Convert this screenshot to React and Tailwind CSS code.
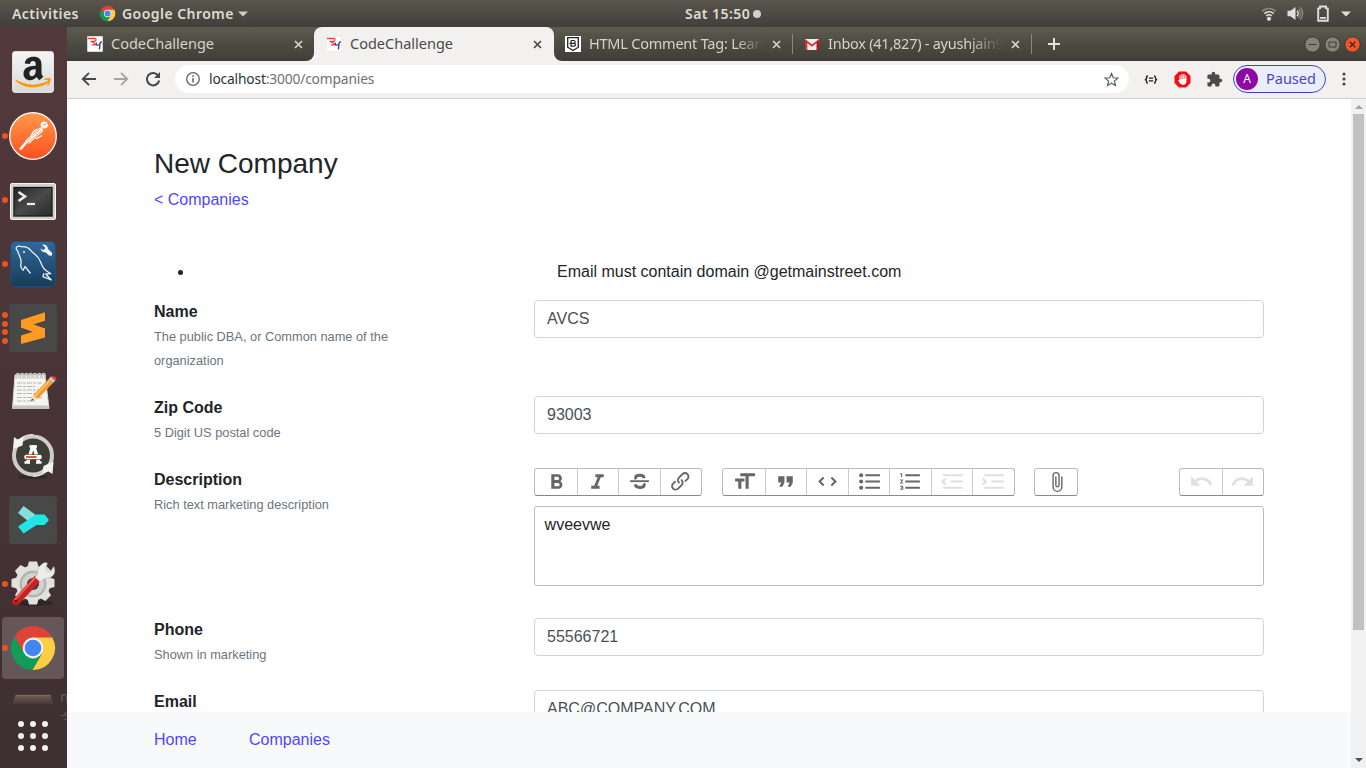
import React from "react";

const UI = "font-['Noto_Sans','Open_Sans',sans-serif]";

function ChromeLogo({ className }) {
  return (
    <svg viewBox="0 0 48 48" className={className}>
      <path d="M5.24 12.5A22 22 0 0 1 43.3 13.5L24 13.5V24L14.9 29.25Z" fill="#db4437" />
      <path d="M43.3 13.5A22 22 0 0 1 23.4 46L33.1 29.25L24 24V13.5Z" fill="#ffcd40" />
      <path d="M23.4 46A22 22 0 0 1 5.24 12.5L14.9 29.25L24 24L33.1 29.25Z" fill="#0f9d58" />
      <circle cx="24" cy="24" r="10.4" fill="#f1f1f1" />
      <circle cx="24" cy="24" r="8.3" fill="#4285f4" />
    </svg>
  );
}

function TopBar() {
  return (
    <header className={`flex h-[27px] shrink-0 items-center bg-linear-to-b from-[#5a564d] to-[#403f3a] text-[14px] font-semibold tracking-[0.45px] text-[#dfdbd2] ${UI}`}>
      <div className="flex w-[620px] items-center pl-3">
        <span className="w-[87px] whitespace-nowrap">Activities</span>
        <ChromeLogo className="h-[17px] w-[17px]" />
        <span className="ml-[6px] w-[110px] whitespace-nowrap">Google Chrome</span>
        <svg width="10" height="6" className="ml-[6px]"><path d="M0 .5h10L5 5.5z" fill="#cfccc4" /></svg>
      </div>
      <div className="flex flex-1 items-center pl-[65px]">
        <span className="w-[65px] whitespace-nowrap">Sat 15:50</span>
        <span className="ml-[3px] h-2 w-2 rounded-full bg-[#cfcfcf]" />
      </div>
      <div className="flex items-center pr-[15px]">
        <svg width="16" height="16" viewBox="0 0 16 16" fill="none" strokeWidth="1.6">
          <path d="M1.2 5.400a9.500 9.500 0 0 1 13.600 0" stroke="#8b8880" />
          <path d="M3.400 7.600a6.500 6.500 0 0 1 9.200 0" stroke="#dedede" />
          <path d="M5.300 9.900a3.600 3.600 0 0 1 5.400 0" stroke="#dedede" />
          <circle cx="8" cy="12.800" r="2.100" fill="#dedede" />
        </svg>
        <svg width="18" height="16" viewBox="0 0 18 16" fill="none" strokeWidth="1.4" className="ml-[10px]">
          <path d="M.5 4.800h3L8.500 1v13L3.500 10.200h-3z" fill="#dedede" />
          <path d="M10 4.800a4 4 0 0 1 0 5.400" stroke="#dedede" />
          <path d="M11.600 3a7 7 0 0 1 0 9M13.300 1.300a9.500 9.500 0 0 1 0 12.400" stroke="#8b8880" />
        </svg>
        <svg width="12" height="17" viewBox="0 0 12 17" className="ml-[12px]">
          <path d="M1.2 3.500L3 3.200V1.500h6v1.700l1.800.3v12.200H1.200z" fill="none" stroke="#dedede" strokeWidth="1.900" />
          <path d="M3 12h6v1.800H3z" fill="#dedede" />
        </svg>
        <svg width="10" height="6" className="ml-[12px]"><path d="M0 .5h10L5 5.5z" fill="#dedede" /></svg>
      </div>
    </header>
  );
}

function AmazonIcon() {
  return (
    <svg viewBox="0 0 48 48" className="size-12">
      <defs><linearGradient id="am" x2="0" y2="1"><stop stopColor="#f5f5f5" /><stop offset="1" stopColor="#d9d9d9" /></linearGradient></defs>
      <rect x="3.7" y="3.7" width="40.600" height="40.600" rx="2" fill="url(#am)" stroke="#fafafa" />
      <path d="M15.700 15.500C16.500 11 19.500 8.800 24.500 8.800c5.200 0 8 2.600 8 7.700v8c0 2 .6 3 1.800 4.300l-3.900 3.400c-1.300-1-2.200-2-2.800-3.100-1.700 2-3.700 3.100-6.300 3.100-4 0-6.800-2.400-6.800-6.500 0-5.400 4.300-7.700 12.200-7.900v-1.500c0-2-.8-3.200-2.700-3.200-1.700 0-2.700 1-3 2.900zM26.700 21.300c-4 .1-6.300 1.200-6.300 4 0 1.800.9 2.900 2.500 2.900 2.400 0 3.900-2.200 3.800-5.600z" fill="#222" />
      <path d="M6.500 31.500c10.500 6.500 23 7 33.200.8l.9 1.400c-10.500 8.300-25.500 7-34.500-1.300z" fill="#f90" />
      <path d="M35.200 31c2-1 5-1.300 6.500-.6.3 2-1 5.500-2.700 7.100l-.8-.5c.9-1.600 1.400-3.500 1.100-4.700-1-.5-2.700-.4-4.100-.3z" fill="#f90" />
    </svg>
  );
}

function PostmanIcon() {
  return (
    <svg viewBox="0 0 48 48" className="size-12">
      <defs><linearGradient id="pm" x2="0" y2="1"><stop stopColor="#ff9a4a" /><stop offset="1" stopColor="#fd4f1f" /></linearGradient></defs>
      <circle cx="24" cy="24" r="23.300" fill="url(#pm)" stroke="#fff" strokeWidth="1.300" />
      <circle cx="35.200" cy="13" r="3.600" fill="#fff" />
      <path d="M34.500 13l3-1.500" stroke="#fd7a38" strokeWidth="1" />
      <path d="M31 15.500c2.500.3 3.300 1.700 2.800 4L20 31.700l-3.700-3.200z" fill="#fff" />
      <path d="M30.500 17.500L18.500 28.600M33 18.800L19 31" stroke="#fd7a38" strokeWidth=".8" />
      <path d="M17.500 30l-5.700 6.700" stroke="#fff" strokeWidth="2.600" strokeLinecap="round" />
      <path d="M22.500 25.500c-.5-4 2-7 6-8.500M27 27l6-3.500" stroke="#fff" strokeWidth="1.100" fill="none" />
    </svg>
  );
}

function TerminalIcon() {
  return (
    <svg viewBox="0 -2 48 48" className="size-12">
      <defs><linearGradient id="tm" x2="1" y2="1"><stop stopColor="#252525" /><stop offset=".5" stopColor="#4a4a4a" /><stop offset="1" stopColor="#2a2a2a" /></linearGradient></defs>
      <rect x="1.500" y="5.500" width="45" height="36" rx="1.500" fill="#cfcfcc" stroke="#f4f4f4" />
      <rect x="4" y="8.500" width="40" height="30.500" fill="#9a9a98" />
      <rect x="5" y="9.500" width="38" height="28.500" fill="url(#tm)" stroke="#111" />
      <path d="M9.500 14l6.500 4.500-6.500 4.500" stroke="#eee" strokeWidth="2.600" fill="none" />
      <path d="M18 26h8" stroke="#eee" strokeWidth="2.200" />
    </svg>
  );
}

function WorkbenchIcon() {
  return (
    <svg viewBox="0 0 48 48" className="size-12">
      <defs><linearGradient id="wb" x2="0" y2="1"><stop stopColor="#30699c" /><stop offset="1" stopColor="#173c5a" /></linearGradient></defs>
      <rect x="1.500" y="1.500" width="45" height="45" rx="5" fill="url(#wb)" stroke="#204e75" />
      <g fill="none" stroke="#e9f0f5" strokeWidth="1.300" strokeLinejoin="round">
        <path d="M21.500 33.500L16 26.500l-1.800 3.800c-2-1.500-3-4.500-2-8 0-4.500-2.500-7-3.500-11.300-1.500-1.500-2-2.700-1.200-3.800 1.500-1.200 3.500-1.200 5.500-.4 3-.5 6 .5 8.500 3.400 3 4 7 4 10 11.500 1.800 4.500 2.500 7.500 6.500 9.500l3.800 2.500-5 .3c1.500 2 3.500 4 5.500 6l-8.500-3.300" />
        <path d="M33.800 36.700l1.200-3.500" />
      </g>
      <circle cx="15" cy="12" r=".9" fill="#fff" />
      <path d="M33 4.500l3.500 3.500-2.300 2.200-2.600-2c.4 3 2.200 4.200 4.800 4l3.500 3.300 3 .2.300-2.700-4-3.800c-.2-3-2.700-5.200-6.200-4.700z" fill="#edf3f7" />
    </svg>
  );
}

function SublimeIcon() {
  return (
    <svg viewBox="0 0 48 48" className="size-12">
      <rect width="48" height="48" rx="3" fill="#484848" />
      <path d="M12 16L36 8.300v8.500L22.500 21 36 25v8.500L12 40v-8.500L26.500 27 12 22.500z" fill="#ff9a23" />
      <path d="M22 28.500l4.500-1.500L12 22.500 36 25v2z" fill="#ef8310" opacity=".6" />
      <path d="M12 16L36 24.500v8L12 23.500z" fill="#ff9a23" />
    </svg>
  );
}

function EditorIcon() {
  return (
    <svg viewBox="0 1 48 48" className="size-12">
      <path d="M6 8h30l4 33.500H3.500z" fill="#f5f5f3" stroke="#d8d8d4" />
      <path d="M4 38.500h35.500l.5 3.500H3.500z" fill="#c4c4be" />
      {[8, 12.3, 16.6, 20.9, 25.200, 29.500, 33.800].map((x) => (
        <path key={x} d={`M${x} 11.500c-1.800-2.500-1-5 .8-5s2 2.500.5 5`} fill="none" stroke="#c9c9c9" strokeWidth="1.500" />
      ))}
      {[16, 19.500, 23, 26.500, 30.500, 34].map((y, i) => (
        <path key={y} d={`M8 ${y}h${i % 2 ? 18 : 25}`} stroke="#b7b7b3" strokeDasharray="5 1 3 1" strokeWidth="1" />
      ))}
      <path d="M22 34l2.500-6 4.500 3.800z" fill="#f3d49b" />
      <path d="M22 34l1-2.300 1.600 1.300z" fill="#222" />
      <path d="M24.500 28L39.500 12l4.500 4L29 31.800z" fill="#f79a28" />
      <path d="M26 29L41 13.200" stroke="#ffc673" strokeWidth="1.500" />
      <path d="M39.500 12l2.500-2.500 4.500 4L44 16z" fill="#c9c9c9" />
      <path d="M42 9.500c2-2 7 1.500 5.200 3.500l-1 1z" fill="#e33c3c" />
    </svg>
  );
}

function UpdaterIcon() {
  return (
    <svg viewBox="0 0 48 48" className="size-12">
      <ellipse cx="24" cy="45" rx="15" ry="2" fill="#1d1718" opacity=".4" />
      <circle cx="24" cy="23.500" r="19" fill="#3e3e38" stroke="#cfcdcb" strokeWidth="4" />
      <path d="M24 2.500a21 21 0 0 0-18 10M42 34a21 21 0 0 1-18 10.500" fill="none" stroke="#f4f4f4" strokeWidth="1" />
      <path d="M4 17l1-12 3.500 2.500L14.500 5l-1 8.500z" fill="#f2f2f2" />
      <path d="M44.500 29.500l-1 12.500-4-2.500-6.500 2 1.500-7.500z" fill="#f2f2f2" />
      <path d="M18.500 31L23.500 15h1.500l5 16" stroke="#fff" strokeWidth="3.400" fill="none" />
      <path d="M20.500 14.500h7.500M15.500 30.500h5.500M27 30.500h5.500" stroke="#fff" strokeWidth="2.400" />
      <rect x="15" y="22.500" width="18" height="5" rx="2" fill="#fff" stroke="#3e3e38" strokeWidth=".6" />
      <path d="M17 25h10.500" stroke="#e95420" strokeWidth="2" />
    </svg>
  );
}

function ArrowAppIcon() {
  return (
    <svg viewBox="0 0 48 48" className="size-12">
      <rect width="48" height="48" rx="3" fill="#484848" />
      <path d="M14.500 10l13 9.500-8.500 5.500-10-8z" fill="#86dedb" />
      <path d="M9 30.500L27 18.500h8.500l4.500 5.500-4.500 5H27.500l-13 8.500z" fill="#1fe6e3" />
    </svg>
  );
}

function ToolsIcon() {
  return (
    <svg viewBox="0 0 48 48" className="size-12">
      <ellipse cx="25" cy="43" rx="19" ry="3" fill="#1d1718" opacity=".5" />
      <g fill="#e1e1de">
        {[0, 45, 90, 135, 180, 225, 270, 315].map((a) => (
          <path key={a} d="M18.500 7L20 1.500h8L29.500 7z" transform={`rotate(${a} 24 23)`} />
        ))}
        <circle cx="24" cy="23" r="17.500" />
      </g>
      <circle cx="24" cy="24" r="13.500" fill="#b4b4b1" />
      <circle cx="24" cy="24" r="11" fill="#d2d2cf" />
      <circle cx="24" cy="24" r="6" fill="#4b3a3c" />
      <path d="M3.500 40.500L26 15.500l5.500 5.500L9.500 44.500c-4 1.500-7.500-1-6-4z" fill="#c92020" />
      <path d="M5.500 40L27 17" stroke="#f15b55" strokeWidth="2" />
      <circle cx="7" cy="41" r="1.300" fill="#5d1515" />
      <path d="M28.500 14.500c-.5-5 2-9.500 7-12l3 .5-2 5.500 2 3 3.500-.5 2.500-4.500c2.500 4 1 9-3 11-2.500 1-4.500.5-7 1.800L31 22l-5-5z" fill="#ececea" stroke="#aaa" strokeWidth=".5" />
    </svg>
  );
}

const DOCK = [
  { icon: <AmazonIcon />, dots: 0 },
  { icon: <PostmanIcon />, dots: 1 },
  { icon: <TerminalIcon />, dots: 1 },
  { icon: <WorkbenchIcon />, dots: 1 },
  { icon: <SublimeIcon />, dots: 4 },
  { icon: <EditorIcon />, dots: 0 },
  { icon: <UpdaterIcon />, dots: 0 },
  { icon: <ArrowAppIcon />, dots: 0 },
  { icon: <ToolsIcon />, dots: 1 },
  { icon: <ChromeLogo className="size-12" />, dots: 1, active: true },
];

function Dock() {
  return (
    <aside className="flex w-[67px] shrink-0 flex-col bg-linear-to-b from-[#53393b] to-[#3d2f32] pt-[13px]">
      {DOCK.map((d, i) => (
        <div key={i} className="h-16 shrink-0 px-[2px] py-px">
          <div className={`flex h-[62px] w-[62px] items-center rounded-[4px] ${d.active ? "bg-[#655659]" : ""}`}>
            <div className="flex w-[7px] shrink-0 flex-col gap-[2.500px]">
              {Array.from({ length: d.dots }, (_, k) => (
                <span key={k} className="size-[6px] rounded-full bg-[#e95420]" />
              ))}
            </div>
            {d.icon}
          </div>
        </div>
      ))}
      <div className={`flex h-[41px] shrink-0 overflow-hidden text-[14px] leading-[18px] text-[#655b5c] ${UI}`}>
        <svg width="60" height="39" viewBox="0 0 60 39" className="shrink-0">
          <defs><linearGradient id="fd" x2="0" y2="1"><stop stopColor="#6f5f52" /><stop offset="1" stopColor="#46393a" /></linearGradient></defs>
          <path d="M15.500 15h35l2.500 9H12.500z" fill="url(#fd)" />
          <path d="M15.500 15.300h35" stroke="#85776a" strokeWidth=".7" />
        </svg>
        <div className="w-[7px] overflow-hidden pt-[8px] whitespace-nowrap">
          <div>n</div>
          <div className="tracking-[-1px]">-s</div>
        </div>
      </div>
      <div className="mr-[2px] grid w-[30px] shrink-0 grid-cols-3 gap-[6px] self-center">
        {Array.from({ length: 9 }, (_, k) => (
          <span key={k} className="size-[6px] rounded-full bg-[#f2f2f2]" />
        ))}
      </div>
    </aside>
  );
}

function RYIcon() {
  return (
    <svg width="16" height="16" viewBox="0 0 16 16">
      <rect x=".3" y=".3" width="15.400" height="15.400" rx="1" fill="#fff" stroke="#e3e3e3" strokeWidth=".6" />
      <path d="M.8 2.500h6.700c2.200 0 1.800 2.700-.3 2.800H3.500M4.500 5.500l3 1.700 1 1.600H5" stroke="#e8423c" strokeWidth="1.300" fill="none" />
      <path d="M9.500 6.500c-.8 2 .2 3.200 3 2.200M14.800 5.800c-1.300.3-2 1.500-2 3.200 0 2 0 3-.5 4.500" stroke="#3b47a8" strokeWidth="1.400" fill="none" />
    </svg>
  );
}

function ShieldIcon() {
  return (
    <svg width="16" height="16" viewBox="0 0 16 16">
      <rect width="16" height="16" fill="#fff" />
      <path d="M2.700 1.700h10.600v9.500L8 14.500l-5.300-3.300z" fill="none" stroke="#222" strokeWidth="1.300" />
      <path d="M6 4.500h2.700a1.400 1.400 0 0 1 0 2.800H4.500M6 4.500v5.700h3a1.450 1.450 0 0 0 0-2.900" fill="none" stroke="#222" strokeWidth="1.200" />
    </svg>
  );
}

function GmailIcon() {
  return (
    <svg width="16" height="16" viewBox="0 0 16 16">
      <path d="M1 3h14v11H1z" fill="#eee" />
      <path d="M1 14V3l7 5.500L15 3v11h-2.300V7L8 10.700 3.300 7v7z" fill="#e02b2b" />
      <path d="M12.700 14V7L15 5v9z" fill="#b3161d" />
    </svg>
  );
}

function Close({ className }) {
  return (
    <svg width="9" height="9" viewBox="0 0 9 9" className={className}>
      <path d="M1 1l7 7M8 1L1 8" stroke="currentColor" strokeWidth="1.700" />
    </svg>
  );
}

function TabStrip() {
  return (
    <div className={`flex h-[34px] shrink-0 bg-linear-to-b from-[#5c5b4e] to-[#3e3d38] text-[14.500px] text-[#d6d3c8] ${UI}`}>
      <div className="flex h-[34px] w-[247px] items-center pl-5">
        <RYIcon />
        <span className="ml-2 w-[183px]">CodeChallenge</span>
        <Close />
      </div>
      <div className="relative flex h-[34px] w-[240px] items-center rounded-t-[8px] bg-[#f2f1f0] pl-[12px] text-[#4a4a4a]">
        <svg width="8" height="8" className="absolute bottom-0 -left-2"><path d="M8 0v8H0a8 8 0 0 0 8-8z" fill="#f2f1f0" /></svg>
        <svg width="8" height="8" className="absolute -right-2 bottom-0"><path d="M0 0v8h8a8 8 0 0 1-8-8z" fill="#f2f1f0" /></svg>
        <RYIcon />
        <span className="ml-2 w-[183px]">CodeChallenge</span>
        <Close />
      </div>
      <div className="flex h-[34px] w-[238px] items-center pl-[11px]">
        <ShieldIcon />
        <span className="mr-[9px] ml-2 w-[174px] overflow-hidden mask-r-from-85% mask-r-to-100% tracking-[-0.22px] whitespace-nowrap">HTML Comment Tag: Learn</span>
        <Close />
      </div>
      <span className="mt-[7px] h-5 w-px bg-[#8b897e]" />
      <div className="flex h-[34px] w-[238px] items-center pl-[11px]">
        <GmailIcon />
        <span className="mr-[8px] ml-2 w-[175px] overflow-hidden mask-r-from-80% mask-r-to-100% tracking-[-0.25px] whitespace-nowrap">Inbox (41,827) - ayushjain98</span>
        <Close />
      </div>
      <span className="mt-[7px] h-5 w-px bg-[#8b897e]" />
      <svg width="12" height="12" viewBox="0 0 12 12" className="mt-[11px] ml-4">
        <path d="M6 0v12M0 6h12" stroke="#e4e1d8" strokeWidth="2" />
      </svg>
      <div className="ml-auto flex items-center gap-[3px] pr-[5px]">
        <svg width="17" height="17" viewBox="0 0 17 17"><circle cx="8.500" cy="8.500" r="7.700" fill="#85837a" stroke="#3a3934" /><path d="M4.500 8.500h8" stroke="#3c3b36" /></svg>
        <svg width="17" height="17" viewBox="0 0 17 17"><circle cx="8.500" cy="8.500" r="7.700" fill="#85837a" stroke="#3a3934" /><path d="M5 6h7v5H5z" fill="none" stroke="#3c3b36" /></svg>
        <svg width="17" height="17" viewBox="0 0 17 17"><circle cx="8.500" cy="8.500" r="7.700" fill="#f2562b" stroke="#3a3934" /><path d="M5.700 5.700l5.600 5.600M11.300 5.700l-5.600 5.600" stroke="#4a2010" strokeWidth="1.300" /></svg>
      </div>
    </div>
  );
}

function Toolbar() {
  return (
    <div className={`flex h-[38px] shrink-0 items-center border-b border-[#cfcfcf] bg-[#f2f1f0] pb-px ${UI}`}>
      <svg width="16" height="16" viewBox="0 0 16 16" className="ml-[14px]"><path d="M15 8H2.200M8 1.800L1.800 8 8 14.200" fill="none" stroke="#45474a" strokeWidth="1.900" /></svg>
      <svg width="16" height="16" viewBox="0 0 16 16" className="ml-4"><path d="M1 8h12.800M8 1.800L14.200 8 8 14.200" fill="none" stroke="#a5a5a5" strokeWidth="1.900" /></svg>
      <svg width="16" height="16" viewBox="0 0 16 16" className="ml-4"><path d="M13.300 4.700A6.200 6.200 0 1 0 14.200 9.500" fill="none" stroke="#45474a" strokeWidth="2" /><path d="M15 1v6H9z" fill="#45474a" /></svg>
      <div className="ml-[14px] flex h-7 w-[954px] items-center rounded-full bg-white pl-[11px]">
        <svg width="14" height="14" viewBox="0 0 14 14"><circle cx="7" cy="7" r="6.300" fill="none" stroke="#5f6368" strokeWidth="1.300" /><path d="M7 6v4.500M7 3.300v1.600" stroke="#5f6368" strokeWidth="1.500" /></svg>
        <span className="ml-[9px] w-[896px] text-[13.800px] tracking-[-0.17px] text-[#6f7072]"><span className="text-[#2e3436]">localhost</span>:3000/companies</span>
        <svg width="15" height="15" viewBox="0 0 24 24" className="-ml-[1px]"><path d="M12 2.500l2.900 6.700 7.200.6-5.500 4.800 1.700 7.100L12 17.900l-6.300 3.800 1.700-7.100L1.900 9.800l7.200-.6z" fill="none" stroke="#5f6368" strokeWidth="2" /></svg>
      </div>
      <svg width="14" height="9" viewBox="0 0 14 9" className="ml-[15px]"><path d="M4 .8C2.500.8 2.500 1.500 2.500 3S2 4.500.8 4.500C2 4.500 2.500 4.700 2.500 6s0 2.200 1.500 2.200M10 .8c1.500 0 1.500.7 1.500 2.200s.5 1.500 1.700 1.500c-1.200 0-1.700.2-1.700 1.500s0 2.200-1.500 2.200M4.800 3.100h4.400M4.800 5.800h4.400" fill="none" stroke="#222" strokeWidth="1.300" /></svg>
      <svg width="17" height="17" viewBox="0 0 17 17" className="ml-[16px]">
        <path d="M5 .5h7L16.500 5v7L12 16.500H5L.5 12V5z" fill="#f40d12" />
        <path d="M6 8.500V5M8 7.500V3.500M9.900 7.500V3.500M11.700 8.500V5" stroke="#fff" strokeWidth="1.300" strokeLinecap="round" />
        <path d="M5.400 8h7v2.500c0 2.200-1.400 3.300-3.200 3.300-1.900 0-3-.8-5-4.300.5-.7 1-.5 1.200-.2z" fill="#fff" />
      </svg>
      <svg width="17" height="17" viewBox="0 0 24 24" className="ml-[15px]"><path d="M20.500 11H19V7a2 2 0 0 0-2-2h-4V3.500a2.500 2.500 0 0 0-5 0V5H4a2 2 0 0 0-2 2v3.800h1.500a2.700 2.700 0 0 1 0 5.400H2V20a2 2 0 0 0 2 2h3.800v-1.500a2.700 2.700 0 0 1 5.400 0V22H17a2 2 0 0 0 2-2v-4h1.500a2.500 2.500 0 0 0 0-5z" fill="#4a4a4a" /></svg>
      <div className="ml-[10px] flex h-7 w-[93px] items-center rounded-full border border-[#4040d8] bg-[#e9eef8] pl-[2px] text-[14.500px] text-[#4a43d0]">
        <span className="flex size-[22px] items-center justify-center rounded-full bg-[#8e0aa5] text-[12px] text-white">A</span>
        <span className="ml-2">Paused</span>
      </div>
      <svg width="4" height="14" viewBox="0 0 4 14" className="ml-[16px]" fill="#4a4a4a"><circle cx="2" cy="2" r="1.600" /><circle cx="2" cy="7" r="1.600" /><circle cx="2" cy="12" r="1.600" /></svg>
    </div>
  );
}

const ICONS = {
  bold: "M15.6 11.8c1-.7 1.6-1.8 1.6-2.800a4 4 0 0 0-4-4H7v14h7c2.100 0 3.700-1.700 3.700-3.800 0-1.500-.8-2.800-2.100-3.400zM10 7.500h3a1.500 1.500 0 1 1 0 3h-3v-3zm3.500 9H10v-3h3.500a1.500 1.500 0 1 1 0 3z",
  italic: "M10 5v3h2.200l-3.400 8H6v3h8v-3h-2.200l3.400-8H18V5h-8z",
  link: "M9.88 13.7a4.3 4.3 0 0 1 0-6.07l3.37-3.37a4.26 4.26 0 0 1 6.07 0 4.3 4.3 0 0 1 0 6.06l-1.96 1.72a.91.91 0 1 1-1.3-1.3l1.97-1.71a2.46 2.46 0 0 0-3.48-3.48l-3.38 3.37a2.46 2.46 0 0 0 0 3.48.91.91 0 1 1-1.3 1.3z M4.25 19.46a4.3 4.3 0 0 1 0-6.07l1.93-1.9a.91.91 0 1 1 1.3 1.3l-1.93 1.9a2.46 2.46 0 0 0 3.48 3.48l3.37-3.38c.96-.96.96-2.52 0-3.48a.91.91 0 1 1 1.3-1.3 4.3 4.3 0 0 1 0 6.07l-3.38 3.38a4.26 4.26 0 0 1-6.07 0z",
  heading: "M12 9v3H9v7H6v-7H3V9h9zM8 4h14v3h-6v12h-3V7H8V4z",
  quote: "M6 17h3l2-4V7H5v6h3zm8 0h3l2-4V7h-6v6h3z",
  code: "M18.2 12L15 15.2l1.4 1.4L21 12l-4.6-4.6L15 8.8l3.200 3.200zM5.8 12L9 8.8 7.6 7.4 3 12l4.600 4.600L9 15.200 5.8 12z",
  bullets: "M4 4a2 2 0 1 0 0 4 2 2 0 0 0 0-4zm0 6a2 2 0 1 0 0 4 2 2 0 0 0 0-4zm0 6a2 2 0 1 0 0 4 2 2 0 0 0 0-4zm4 3h14v-2H8v2zm0-6h14v-2H8v2zm0-8v2h14V5H8z",
  numbers: "M2 17h2v.5H3v1h1v.5H2v1h3v-4H2v1zm1-9h1V4H2v1h1v3zm-1 3h1.8L2 13.1v.9h3v-1H3.2L5 10.9V10H2v1zm5-6v2h14V5H7zm0 14h14v-2H7v2zm0-6h14v-2H7v2z",
  outdent: "M3 19h19v-2H3v2zm7-6h12v-2H10v2zm-8.3-.3l2.800 2.900L6 14.200 4 12l2-2-1.400-1.500L1 12l.7.7zM3 5v2h19V5H3z",
  indent: "M3 19h19v-2H3v2zm7-6h12v-2H10v2zm-6.900-1L1 14.200l1.400 1.400L6 12l-.7-.7-2.800-2.800L1 9.900 3.100 12zM3 5v2h19V5H3z",
  attach: "M16.5 6v11.5a4 4 0 1 1-8 0V5a2.500 2.500 0 0 1 5 0v10.500a1 1 0 1 1-2 0V6H10v9.500a2.500 2.500 0 0 0 5 0V5a4 4 0 1 0-8 0v12.500a5.500 5.500 0 0 0 11 0V6h-1.500z",
  undo: "M12.5 8c-2.600 0-5 1-6.900 2.600L2 7v9h9l-3.600-3.600A8 8 0 0 1 20 16l2.400-.8a10.500 10.500 0 0 0-10-7.200z",
  redo: "M18.4 10.6a10.500 10.500 0 0 0-16.900 4.600L4 16a8 8 0 0 1 12.700-3.600L13 16h9V7l-3.600 3.600z",
};

function TrixIcon({ name }) {
  if (name === "strike") {
    return (
      <svg width="25" height="25" viewBox="0 0 24 24" fill="none" stroke="currentColor">
        <path d="M3 11.700h18" strokeWidth="1.800" />
        <path d="M16.400 8.800C16.200 6.900 14.600 6.100 12.300 6.100c-2.500 0-4 1-4 2.300 0 .5.100.9.400 1.300M8 14.800c.2 2 2 2.900 4.300 2.900s4.200-.8 4.200-2.400c0-.5-.1-.8-.4-1.300" strokeWidth="2.900" />
      </svg>
    );
  }
  const size = name === "attach" ? 22 : 25;
  return (
    <svg width={size} height={size} viewBox="0 0 24 24" fill="currentColor">
      <path d={ICONS[name]} />
    </svg>
  );
}

function Group({ items, className, disabled = [] }) {
  return (
    <div className={`flex h-7 rounded-[3px] border border-[#bbb] border-b-[#888] ${className}`}>
      {items.map((n, i) => (
        <div
          key={n}
          className={`flex flex-1 items-center justify-center pb-px ${i ? "border-l border-[#ccc]" : "pl-px"} ${disabled.includes(n) ? "text-[#e0e0e0]" : "text-[#666]"}`}
        >
          <TrixIcon name={n} />
        </div>
      ))}
    </div>
  );
}

function Row({ label, hint, children, className = "mb-6" }) {
  return (
    <div className={`flex ${className}`}>
      <div className="w-[380px] shrink-0">
        <div className="font-bold">{label}</div>
        {hint && <div className="-mb-px w-[260px] pt-px text-[12.8px] text-[#6c757d]">{hint}</div>}
      </div>
      <div className="w-[730px]">{children}</div>
    </div>
  );
}

function Input({ value }) {
  return <div className="h-[38px] rounded-[4px] border border-[#ced4da] px-3 py-[6px] text-[#495057]">{value}</div>;
}

function Page() {
  return (
    <div className="flex min-h-0 flex-1 bg-white font-['Liberation_Sans',Arial,sans-serif] text-base leading-6 text-[#212529]">
      <div className="flex min-w-0 flex-1 flex-col">
        <main className="min-h-0 flex-1 overflow-hidden pt-12 pl-[87px]">
          <h3 className="mb-[7px] text-[28px] leading-[34px]">New Company</h3>
          <a className="block text-[#5046ff]">&lt; Companies</a>
          <div className="mt-12 mb-4 flex">
            <span className="mt-[10px] ml-6 size-[5px] rounded-full bg-[#212529]" />
            <span className="ml-[374px]">Email must contain domain @getmainstreet.com</span>
          </div>
          <Row label="Name" hint="The public DBA, or Common name of the organization"><Input value="AVCS" /></Row>
          <Row label="Zip Code" hint="5 Digit US postal code"><Input value="93003" /></Row>
          <Row label="Description" hint="Rich text marketing description" className="mb-8">
            <div className="flex">
              <Group items={["bold", "italic", "strike", "link"]} className="w-[168px]" />
              <Group items={["heading", "quote", "code", "bullets", "numbers", "outdent", "indent"]} disabled={["outdent", "indent"]} className="ml-5 w-[293px]" />
              <Group items={["attach"]} className="ml-[19px] w-[44px]" />
              <Group items={["undo", "redo"]} disabled={["undo", "redo"]} className="ml-auto w-[85px]" />
            </div>
            <div className="mt-[10px] h-20 rounded-[3px] border border-[#bbb] px-[9.6px] py-[6px]">wveevwe</div>
          </Row>
          <Row label="Phone" hint="Shown in marketing"><Input value="55566721" /></Row>
          <Row label="Email"><Input value="ABC@COMPANY.COM" /></Row>
        </main>
        <footer className="flex h-14 shrink-0 items-center bg-[#f8f9fb] pl-[87px] text-[#5046ff]">
          <span className="w-[95px]">Home</span>
          <span>Companies</span>
        </footer>
      </div>
      <div className="flex w-[15px] shrink-0 flex-col items-center bg-[#f1f1f1]">
        <svg width="8" height="15" viewBox="0 0 8 15" className="shrink-0"><path d="M0 10h8L4 6z" fill="#a3a3a3" /></svg>
        <div className="h-[516px] w-[11px] bg-[#c1c1c1]" />
        <svg width="8" height="15" viewBox="0 0 8 15" className="mt-auto shrink-0"><path d="M0 5h8L4 9z" fill="#505050" /></svg>
      </div>
    </div>
  );
}

export default function App() {
  return (
    <div className="flex h-screen w-screen flex-col overflow-hidden">
      <TopBar />
      <div className="flex min-h-0 flex-1">
        <Dock />
        <div className="flex min-w-0 flex-1 flex-col">
          <TabStrip />
          <Toolbar />
          <Page />
        </div>
      </div>
    </div>
  );
}
